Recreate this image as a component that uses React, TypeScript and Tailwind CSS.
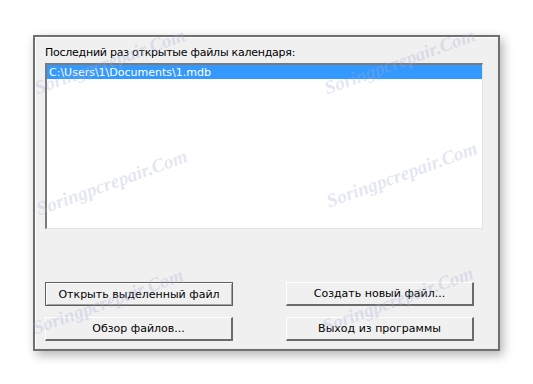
import type { ReactNode } from "react";

const font = { fontFamily: '"DejaVu Sans", Tahoma, sans-serif' };

function Button({ children, isDefault }: { children: ReactNode; isDefault?: boolean }) {
  return (
    <button
      className={
        "h-[24px] w-[188px] bg-[#f0f0f0] text-[11px] text-black leading-none " +
        (isDefault
          ? "border border-[#5e5e5e] shadow-[inset_1px_1px_0_#fff,inset_-1px_-1px_0_#a0a0a0]"
          : "border-t border-l border-t-white border-l-white border-r-2 border-b-2 border-r-[#6b6b6b] border-b-[#6b6b6b]")
      }
    >
      {children}
    </button>
  );
}

const marks = [
  "left-[110px] top-[62px]",
  "left-[400px] top-[62px]",
  "left-[112px] top-[183px]",
  "left-[402px] top-[175px]",
  "left-[108px] top-[302px]",
  "left-[398px] top-[300px]",
];

export default function App() {
  return (
    <div className="relative h-[384px] w-[533px] overflow-hidden bg-white pl-[33px] pt-[35px]" style={font}>
      <div className="flex h-[316px] w-[467px] flex-col border-2 border-[#707070] bg-[#f0f0f0] pl-[10px] pt-[9px] shadow-[inset_1px_1px_0_#fff,inset_-1px_-1px_0_#e4ecec,3px_4px_10px_rgba(0,0,0,0.3)]">
        <div className="h-[17px] text-[11px] leading-[13px] tracking-[-0.25px] text-black">
          Последний раз открытые файлы календаря:
        </div>
        <div className="h-[166px] w-[438px] border-t-2 border-l-2 border-t-[#7a7a7a] border-l-[#7a7a7a] border-r border-b border-r-[#e3e3e3] border-b-[#e3e3e3] bg-white">
          <div className="flex h-[14px] items-center bg-[#3399ff] pl-[2px] text-[11px] leading-none text-white">
            C:\Users\1\Documents\1.mdb
          </div>
        </div>
        <div className="mt-[53px] grid grid-cols-[188px_188px] gap-x-[53px] gap-y-[11px]">
          <Button isDefault>Открыть выделенный файл</Button>
          <Button>Создать новый файл...</Button>
          <Button>Обзор файлов...</Button>
          <Button>Выход из программы</Button>
        </div>
      </div>
      {marks.map((m) => (
        <div
          key={m}
          className={"pointer-events-none absolute -translate-x-1/2 -translate-y-1/2 -rotate-[20deg] whitespace-nowrap text-[19px] font-bold italic text-[rgba(160,172,210,0.3)] " + m}
          style={{ fontFamily: '"Liberation Serif", serif' }}
        >
          Soringpcrepair.Com
        </div>
      ))}
    </div>
  );
}
